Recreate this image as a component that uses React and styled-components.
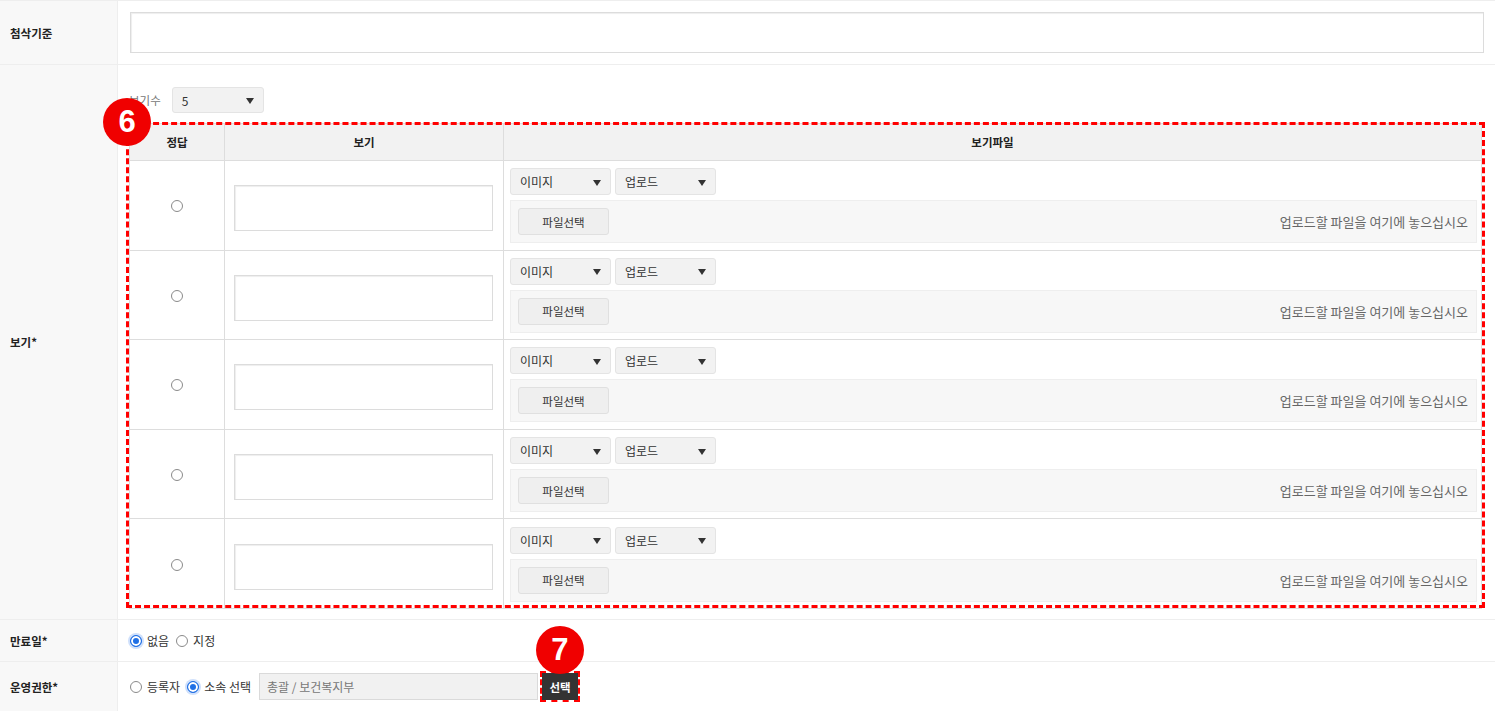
import React from "react";
import styled, { createGlobalStyle } from "styled-components";

const GlobalStyle = createGlobalStyle`
  html, body {
    margin: 0;
    padding: 0;
    background: #ffffff;
  }
  body {
    font-family: "Noto Sans CJK KR", "Noto Sans", sans-serif;
    color: #222;
  }
`;

const Form = styled.div`
  width: 1495px;
  border-top: 1px solid #eeeeee;
`;

const FormRow = styled.div`
  display: grid;
  grid-template-columns: 118px 1fr;
  border-bottom: 1px solid #eeeeee;
  min-height: ${({ h }) => h}px;
`;

const Label = styled.div`
  display: flex;
  align-items: center;
  padding-left: 10px;
  background: #f8f8f8;
  border-right: 1px solid #eeeeee;
  font-size: 11.5px;
  font-weight: 700;
  color: #222;
`;

const Cell = styled.div`
  padding: ${({ pad }) => pad};
  display: flex;
  flex-direction: column;
  justify-content: ${({ center }) => (center ? "center" : "flex-start")};
`;

const WideInput = styled.div`
  height: 39px;
  border: 1px solid #dcdcdc;
  box-shadow: inset 1px 1px 1px #eeeeee;
  background: #fff;
`;

const CountLine = styled.div`
  display: flex;
  align-items: center;
  gap: 11px;
  font-size: 11.5px;
  color: #777;
  margin-bottom: 10px;
`;

const Select = styled.div`
  position: relative;
  box-sizing: border-box;
  width: ${({ w }) => w}px;
  height: ${({ hh }) => hh || 27}px;
  padding-left: 9px;
  display: flex;
  align-items: center;
  background: #f2f2f2;
  border: 1px solid #e4e4e4;
  border-radius: 3px;
  font-size: 12px;
  color: #333;
  &::after {
    content: "";
    position: absolute;
    right: 9px;
    top: 50%;
    margin-top: -2px;
    border-left: 4px solid transparent;
    border-right: 4px solid transparent;
    border-top: 6px solid #333;
  }
`;

const TableWrap = styled.div`
  position: relative;
`;

const Dashed = styled.div`
  position: absolute;
  inset: ${({ inset }) => inset};
  border: ${({ bw }) => bw}px dashed #ff0000;
  pointer-events: none;
`;

const Badge = styled.div`
  position: absolute;
  left: ${({ x }) => x}px;
  top: ${({ y }) => y}px;
  width: 48px;
  height: 48px;
  border-radius: 50%;
  background: #f00000;
  color: #fff;
  display: flex;
  align-items: center;
  justify-content: center;
  font-family: "Liberation Sans", Arial, sans-serif;
  font-weight: 700;
  font-size: 31px;
  z-index: 3;
`;

const Table = styled.table`
  width: 100%;
  border-collapse: collapse;
  border: 1px solid #dddddd;
  table-layout: fixed;
`;

const Th = styled.th`
  height: 36px;
  padding: 0;
  background: #f2f2f2;
  border: 1px solid #dddddd;
  font-size: 11.5px;
  font-weight: 700;
  color: #222;
  width: ${({ w }) => (w ? `${w}px` : "auto")};
`;

const Td = styled.td`
  height: 89.6px;
  box-sizing: border-box;
  border: 1px solid #dddddd;
  padding: ${({ pad }) => pad || "0"};
  text-align: ${({ align }) => align || "left"};
  vertical-align: middle;
`;

const Radio = styled.span`
  display: inline-block;
  box-sizing: border-box;
  width: 12px;
  height: 12px;
  border-radius: 50%;
  border: 1px solid ${({ checked }) => (checked ? "#1f6fe5" : "#8a8a8a")};
  background: ${({ checked }) => (checked ? "#1f6fe5" : "#fff")};
  box-shadow: ${({ checked }) =>
    checked ? "inset 0 0 0 2px #fff, 0 0 0 2px #cfe0fb" : "none"};
  flex-shrink: 0;
`;

const TextBox = styled.div`
  height: 44px;
  border: 1px solid #dcdcdc;
  box-shadow: inset 1px 1px 1px #eeeeee;
  background: #fff;
`;

const FileTop = styled.div`
  display: flex;
  gap: 4px;
  margin-bottom: 5px;
`;

const DropZone = styled.div`
  height: 41px;
  display: flex;
  align-items: center;
  justify-content: space-between;
  padding: 0 8px 0 7px;
  background: #f7f7f7;
  border: 1px solid #eeeeee;
`;

const GrayButton = styled.div`
  box-sizing: border-box;
  width: 91px;
  height: 27px;
  display: flex;
  align-items: center;
  justify-content: center;
  background: #efefef;
  border: 1px solid #e0e0e0;
  border-radius: 3px;
  font-size: 11.5px;
  color: #333;
`;

const DropText = styled.span`
  font-size: 13px;
  color: #666;
`;

const Options = styled.div`
  display: flex;
  align-items: center;
  gap: 5px;
  font-size: 12px;
  color: #333;
`;

const OptionText = styled.span`
  margin-right: 2px;
`;

const ReadOnly = styled.div`
  box-sizing: border-box;
  width: 279px;
  height: 27px;
  margin-left: 1px;
  padding-left: 7px;
  display: flex;
  align-items: center;
  background: #f1f1f1;
  border: 1px solid #dadada;
  font-size: 12px;
  color: #777;
`;

const PickWrap = styled.div`
  position: relative;
  margin-left: -1px;
`;

const DarkButton = styled.div`
  width: 36px;
  height: 27px;
  display: flex;
  align-items: center;
  justify-content: center;
  background: #333333;
  color: #fff;
  font-size: 11.5px;
  font-weight: 700;
`;

const rows = [1, 2, 3, 4, 5];

export default function App() {
  return (
    <>
      <GlobalStyle />
      <Form>
        <FormRow h={63}>
          <Label>첨삭기준</Label>
          <Cell pad="11px 11px 10px 12px">
            <WideInput />
          </Cell>
        </FormRow>

        <FormRow h={554}>
          <Label>보기*</Label>
          <Cell pad="22px 13px 10px 11px">
            <CountLine>
              <span>보기수</span>
              <Select w={92} hh={26}>5</Select>
            </CountLine>
            <TableWrap>
              <Badge x={-26} y={-25}>6</Badge>
              <Dashed inset="-1px -3px 1px -3px" bw={3} />
              <Table>
                <thead>
                  <tr>
                    <Th w={94}>정답</Th>
                    <Th w={278}>보기</Th>
                    <Th>보기파일</Th>
                  </tr>
                </thead>
                <tbody>
                  {rows.map((r) => (
                    <tr key={r}>
                      <Td align="center">
                        <Radio />
                      </Td>
                      <Td pad="6px 10px 0 9px">
                        <TextBox />
                      </Td>
                      <Td pad="7px 4px 6px 6px">
                        <FileTop>
                          <Select w={101}>이미지</Select>
                          <Select w={101}>업로드</Select>
                        </FileTop>
                        <DropZone>
                          <GrayButton>파일선택</GrayButton>
                          <DropText>업로드할 파일을 여기에 놓으십시오</DropText>
                        </DropZone>
                      </Td>
                    </tr>
                  ))}
                </tbody>
              </Table>
            </TableWrap>
          </Cell>
        </FormRow>

        <FormRow h={41}>
          <Label>만료일*</Label>
          <Cell pad="0 12px" center>
            <Options>
              <Radio checked />
              <OptionText>없음</OptionText>
              <Radio />
              <OptionText>지정</OptionText>
            </Options>
          </Cell>
        </FormRow>

        <FormRow h={50}>
          <Label>운영권한*</Label>
          <Cell pad="11px 12px 0 12px">
            <Options>
              <Radio />
              <OptionText>등록자</OptionText>
              <Radio checked />
              <OptionText>소속 선택</OptionText>
              <ReadOnly>총괄 / 보건복지부</ReadOnly>
              <PickWrap>
                <Badge x={-6} y={-47}>7</Badge>
                <DarkButton>선택</DarkButton>
                <Dashed inset="-2px" bw={2} />
              </PickWrap>
            </Options>
          </Cell>
        </FormRow>
      </Form>
    </>
  );
}
